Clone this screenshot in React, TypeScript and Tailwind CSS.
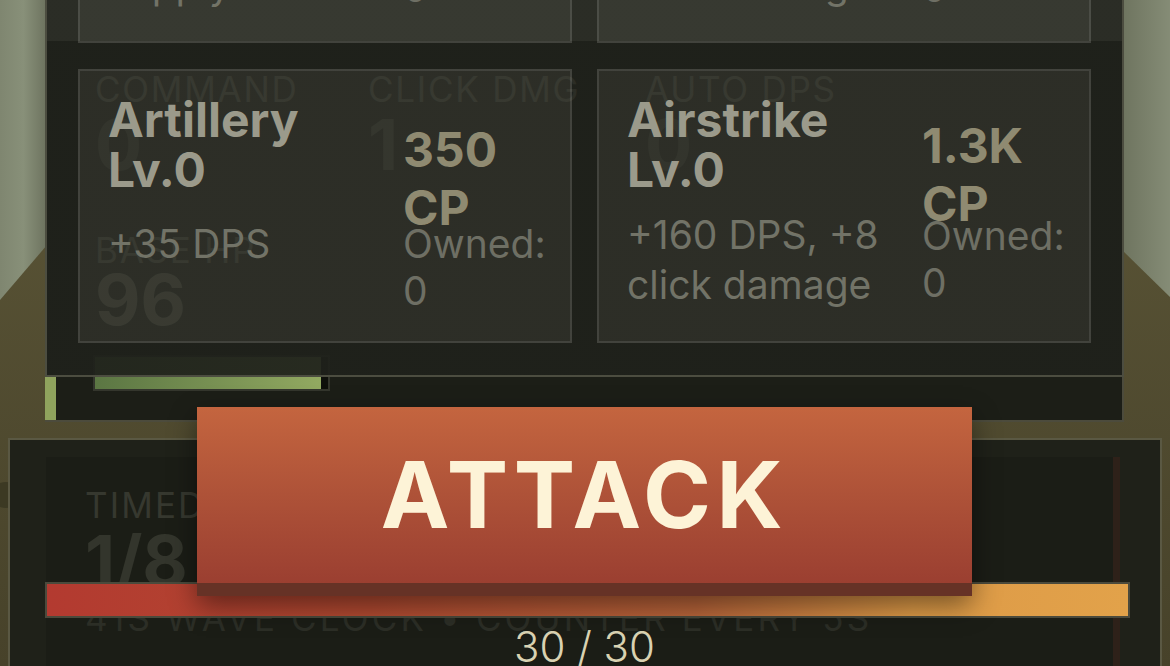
import React from "react";

type Unit = {
  name: string;
  level: string;
  price: string;
  desc: string[];
  owned: string;
  descMt: string;
  priceMt: string;
  ownedMt: string;
};

const units: Unit[] = [
  { name: "Riflemen", level: "Lv.0", price: "60", desc: ["+5 DPS, +1", "supply"], owned: "0", descMt: "mt-[15px]", priceMt: "mt-[22px]", ownedMt: "-mt-[16px]" },
  { name: "Drones", level: "Lv.0", price: "520", desc: ["+60 DPS, +3", "click damage"], owned: "0", descMt: "mt-[15px]", priceMt: "mt-[22px]", ownedMt: "-mt-[16px]" },
  { name: "Artillery", level: "Lv.0", price: "350", desc: ["+35 DPS"], owned: "0", descMt: "mt-[24px]", priceMt: "mt-[26px]", ownedMt: "-mt-[17px]" },
  { name: "Airstrike", level: "Lv.0", price: "1.3K", desc: ["+160 DPS, +8", "click damage"], owned: "0", descMt: "mt-[15px]", priceMt: "mt-[22px]", ownedMt: "-mt-[21px]" },
];

const Backdrop = () => (
  <svg className="absolute inset-0" width="1170" height="666" viewBox="0 0 1170 666">
    <defs>
      <linearGradient id="ground" x1="0" y1="0" x2="0" y2="1">
        <stop offset="0" stopColor="#5f5939" />
        <stop offset="1" stopColor="#47422a" />
      </linearGradient>
      <linearGradient id="skyL" x1="0" y1="0" x2="1" y2="0">
        <stop offset="0" stopColor="#7f8670" />
        <stop offset="0.5" stopColor="#889079" />
        <stop offset="1" stopColor="#6c725e" />
      </linearGradient>
      <linearGradient id="skyR" x1="0" y1="0" x2="1" y2="0">
        <stop offset="0" stopColor="#6e745f" />
        <stop offset="1" stopColor="#858c76" />
      </linearGradient>
    </defs>
    <rect width="1170" height="666" fill="url(#ground)" />
    <polygon points="0,0 47,0 47,245 0,300" fill="url(#skyL)" />
    <polygon points="1122,0 1170,0 1170,297 1122,250" fill="url(#skyR)" />
    <ellipse cx="6" cy="495" rx="16" ry="13" fill="#34331f" opacity="0.7" />
  </svg>
);

const Stat = ({ label, value, tone }: { label: string; value: string; tone: string }) => (
  <div>
    <div className="whitespace-nowrap text-[35px] leading-[36px] tracking-[0.05em] text-[#cfcab0]">{label}</div>
    <div className={`mt-[3px] text-[70px] leading-[70px] font-bold ${tone}`}>{value}</div>
  </div>
);

const UnitCard = ({ u }: { u: Unit }) => (
  <div className="h-[274px] border-2 border-white/10 bg-[rgba(140,142,120,0.13)] pl-[28px] pt-[24px] grid grid-cols-[295px_1fr]">
    <div>
      <div className="whitespace-nowrap text-[48px] leading-[50px] font-bold text-[#9b9a8b]">
        <span className="block">{u.name}</span>
        <span className="block">{u.level}</span>
      </div>
      <div className={`${u.descMt} text-[39px] leading-[50px] text-[#727367]`}>
        {u.desc.map((d) => (
          <span key={d} className="block whitespace-nowrap">{d}</span>
        ))}
      </div>
    </div>
    <div>
      <div className={`${u.priceMt} text-[48px] leading-[58px] font-bold text-[#8f8a71]`}>
        <span className="block">{u.price}</span>
        <span className="block">CP</span>
      </div>
      <div className={`${u.ownedMt} text-[39px] leading-[47px] text-[#6e6f64]`}>
        <span className="block">Owned:</span>
        <span className="block">{u.owned}</span>
      </div>
    </div>
  </div>
);

export default function App() {
  return (
    <div className="relative w-[1170px] h-[666px] overflow-hidden bg-[#595333] font-['Inter',sans-serif]">
      <Backdrop />

      <div className="relative flex flex-col">
        {/* hud */}
        <div className="relative -mt-[20px] ml-[45px] w-[1079px] border-2 border-[#4c4b3c] bg-[#1c1e17] pl-[48px] pt-[89px] pb-[29px]">
          <div className="grid grid-cols-[273px_277px_275px]">
            <Stat label="COMMAND" value="0" tone="text-[#8e8a76]" />
            <Stat label="CLICK DMG" value="1" tone="text-[#a8a38b]" />
            <Stat label="AUTO DPS" value="0" tone="text-[#8e8a76]" />
          </div>
          <div className="mt-[52px] text-[35px] leading-[36px] tracking-[0.05em] text-[#cfcab0]">BASE HP</div>
          <div className="-mt-[3px] text-[70px] leading-[70px] font-bold text-[#ece6ca]">96</div>
          <div className="mt-[20px] -ml-[2px] w-[237px] h-[36px] border-2 border-[#34362d] bg-[#0e100b]">
            <div className="h-full w-[97%] bg-[linear-gradient(to_right,#5b7643,#92a961)]" />
          </div>
          <div className="absolute -left-[2px] bottom-0 w-[11px] h-[44px] bg-[#8fa35d]" />
        </div>

        {/* lower panel */}
        <div className="mt-[16px] ml-[8px] w-[1154px] h-[260px] border-2 border-[#5a5843] bg-[#1f2119] pl-[36px] pt-[17px]">
          <div className="w-[1074px] h-[240px] bg-[#1b1d16] border-r-[7px] border-[#2e2119] pl-[39px] pt-[30px]">
            <div className="text-[35px] leading-[36px] tracking-[0.06em] text-[#36382f]">TIMED</div>
            <div className="mt-[3px] text-[70px] leading-[70px] font-bold text-[#33352c]">1/8</div>
            <div className="relative z-10 -mt-[14px] -ml-[40px] w-[1085px] h-[36px] border-2 border-[#4b4a3c] bg-[linear-gradient(to_right,#b33a30,#b24a31_30%,#b9653a_60%,#dd9a47_80%,#e2a24a)]" />
            <div className="-mt-[18px] whitespace-nowrap text-[35px] leading-[36px] tracking-[0.09em] text-[#2c2e26]">
              41S WAVE CLOCK • COUNTER EVERY 5S
            </div>
            <div className="-mt-[10px] -ml-[39px] w-[1077px] text-center text-[42px] leading-[42px] font-light text-[#d9d2b2]">
              30 / 30
            </div>
          </div>
        </div>
      </div>

      {/* shop overlay */}
      <div className="absolute left-[45px] top-[-257px] w-[1079px] h-[634px] border-x-2 border-b-2 border-[#4c4d40] bg-[linear-gradient(to_bottom,rgba(44,46,39,0.93)_298px,rgba(31,33,27,0.93)_298px)] pt-[26px] px-[31px]">
        <div className="grid grid-cols-[494px_494px] gap-x-[25px] gap-y-[26px]">
          {units.map((u) => (
            <UnitCard key={u.name} u={u} />
          ))}
        </div>
      </div>

      {/* attack */}
      <button className="absolute z-20 left-[197px] top-[407px] w-[775px] h-[189px] border-b-[13px] border-[#663226] bg-[linear-gradient(to_bottom,#c4653f,#ae5238_50%,#9b3f31)] shadow-[0_10px_26px_rgba(0,0,0,0.45)] flex items-center justify-center">
        <span className="text-[92px] leading-none font-bold tracking-[0.06em] text-[#fdf3d7]">ATTACK</span>
      </button>
    </div>
  );
}
